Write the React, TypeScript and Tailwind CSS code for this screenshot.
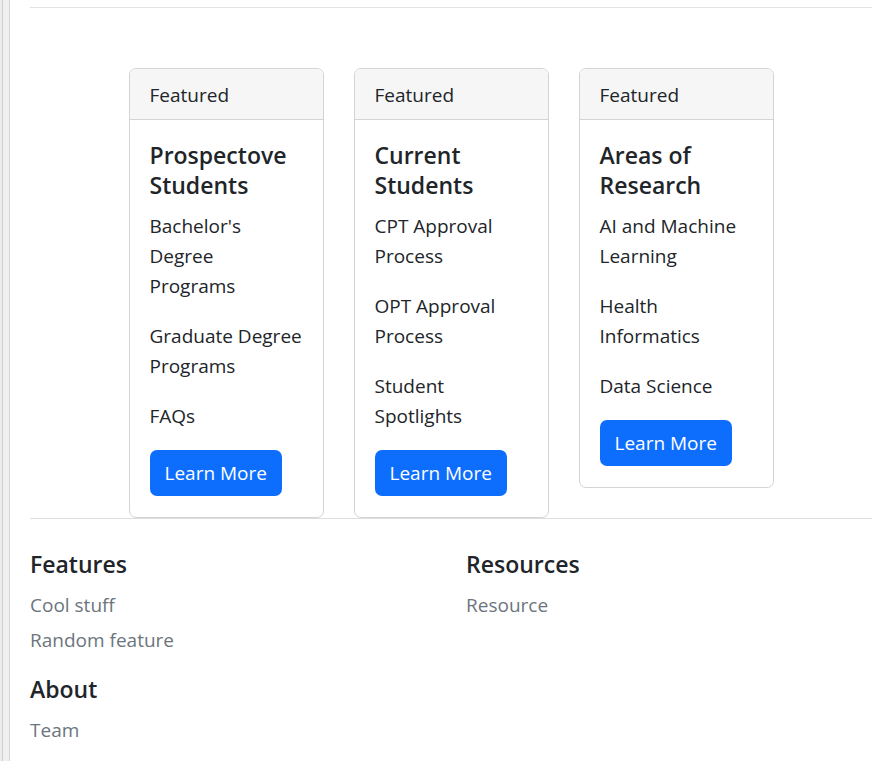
import React from "react";

const cards = [
  {
    title: ["Prospectove", "Students"],
    items: [["Bachelor's", "Degree", "Programs"], ["Graduate Degree", "Programs"], ["FAQs"]],
  },
  {
    title: ["Current", "Students"],
    items: [["CPT Approval", "Process"], ["OPT Approval", "Process"], ["Student", "Spotlights"]],
  },
  {
    title: ["Areas of", "Research"],
    items: [["AI and Machine", "Learning"], ["Health", "Informatics"], ["Data Science"]],
  },
];

const Lines = ({ lines }: { lines: string[] }) => (
  <>
    {lines.map((l, i) => (
      <span key={i} className="block whitespace-nowrap">
        {l}
      </span>
    ))}
  </>
);

const FeatureCard = ({ title, items }: { title: string[]; items: string[][] }) => {
  return (
    <div className="w-[195px] rounded-[7px] border border-[#d3d4d5] bg-white overflow-hidden">
      <div className="h-[51px] px-[20px] pt-[11px] bg-[#f6f6f6] border-b border-[#d3d4d5] text-[19px] leading-[30px]">
        Featured
      </div>
      <div className="px-[20px] pt-[20px] pb-[21px]">
        <h5 className="text-[23px] leading-[30px] font-semibold mb-[10px]">
          <Lines lines={title} />
        </h5>
        {items.map((it, i) => (
          <p key={i} className="text-[19px] leading-[30px] pt-[1px] mb-[19px]">
            <Lines lines={it} />
          </p>
        ))}
        <button className="h-[46px] px-[15px] rounded-[7px] bg-[#0d6efd] text-white text-[19px] leading-[30px]">
          Learn More
        </button>
      </div>
    </div>
  );
};

const FooterCol = ({ title, links }: { title: string; links: string[] }) => (
  <div>
    <h5 className="text-[23px] leading-[30px] font-semibold mb-[10px]">{title}</h5>
    <ul>
      {links.map((l) => (
        <li key={l} className="text-[19px] leading-[30px] pt-[1px] mb-[4px] text-[#6c757d]">
          {l}
        </li>
      ))}
    </ul>
  </div>
);

const App = () => {
  return (
    <div
      className="flex min-h-[761px] bg-white text-[#212529]"
      style={{ fontFamily: '"Open Sans", "Noto Sans", sans-serif' }}
    >
      <div className="w-[10px] shrink-0 flex">
        <div className="w-[2px] bg-[#ececec]" />
        <div className="w-[1px] bg-[#cfcfcf]" />
        <div className="w-[6px] bg-[#f0f0f0]" />
        <div className="w-[1px] bg-[#d6d6d6]" />
      </div>
      <div className="flex-1 pl-[20px] pr-[22px]">
        <hr className="mt-[7px] border-t border-[#e3e3e3]" />
        <div className="pt-[60px] flex justify-center items-start gap-[30px]">
          {cards.map((c, i) => (
            <FeatureCard key={i} title={c.title} items={c.items} />
          ))}
        </div>
        <hr className="border-t border-[#dedede]" />
        <div className="pt-[30px] grid grid-cols-2 gap-x-[30px] gap-y-[15px]">
          <FooterCol title="Features" links={["Cool stuff", "Random feature"]} />
          <FooterCol title="Resources" links={["Resource"]} />
          <FooterCol title="About" links={["Team"]} />
        </div>
      </div>
    </div>
  );
};

export default App;
